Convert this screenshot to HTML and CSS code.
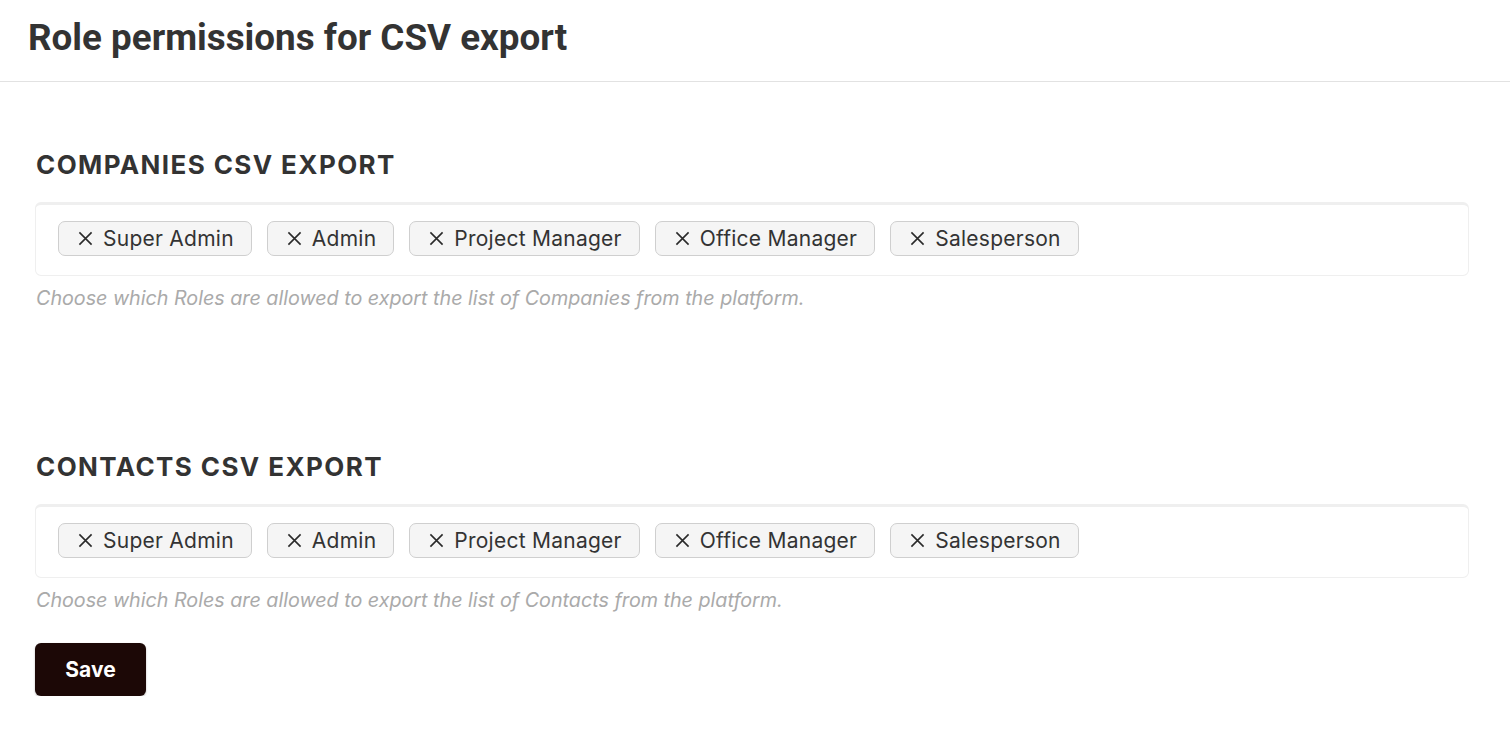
FILE: index.html
```html
<!DOCTYPE html>
<html>
<head>
<meta charset="utf-8">
<link rel="stylesheet" href="styles.css">
</head>
<body>
<header class="page-header">
  <h1 class="page-title">Role permissions for CSV export</h1>
</header>
<main class="content">
  <section class="perm-section">
    <h2 class="section-title">COMPANIES CSV EXPORT</h2>
    <div class="tag-box">
      <span class="tag"><svg class="tag-x" viewBox="0 0 16 16"><path d="M1.5 1.5L14.5 14.5M14.5 1.5L1.5 14.5"/></svg>Super Admin</span>
      <span class="tag"><svg class="tag-x" viewBox="0 0 16 16"><path d="M1.5 1.5L14.5 14.5M14.5 1.5L1.5 14.5"/></svg>Admin</span>
      <span class="tag"><svg class="tag-x" viewBox="0 0 16 16"><path d="M1.5 1.5L14.5 14.5M14.5 1.5L1.5 14.5"/></svg>Project Manager</span>
      <span class="tag"><svg class="tag-x" viewBox="0 0 16 16"><path d="M1.5 1.5L14.5 14.5M14.5 1.5L1.5 14.5"/></svg>Office Manager</span>
      <span class="tag"><svg class="tag-x" viewBox="0 0 16 16"><path d="M1.5 1.5L14.5 14.5M14.5 1.5L1.5 14.5"/></svg>Salesperson</span>
    </div>
    <p class="help">Choose which Roles are allowed to export the list of Companies from the platform.</p>
  </section>
  <section class="perm-section second">
    <h2 class="section-title">CONTACTS CSV EXPORT</h2>
    <div class="tag-box">
      <span class="tag"><svg class="tag-x" viewBox="0 0 16 16"><path d="M1.5 1.5L14.5 14.5M14.5 1.5L1.5 14.5"/></svg>Super Admin</span>
      <span class="tag"><svg class="tag-x" viewBox="0 0 16 16"><path d="M1.5 1.5L14.5 14.5M14.5 1.5L1.5 14.5"/></svg>Admin</span>
      <span class="tag"><svg class="tag-x" viewBox="0 0 16 16"><path d="M1.5 1.5L14.5 14.5M14.5 1.5L1.5 14.5"/></svg>Project Manager</span>
      <span class="tag"><svg class="tag-x" viewBox="0 0 16 16"><path d="M1.5 1.5L14.5 14.5M14.5 1.5L1.5 14.5"/></svg>Office Manager</span>
      <span class="tag"><svg class="tag-x" viewBox="0 0 16 16"><path d="M1.5 1.5L14.5 14.5M14.5 1.5L1.5 14.5"/></svg>Salesperson</span>
    </div>
    <p class="help">Choose which Roles are allowed to export the list of Contacts from the platform.</p>
  </section>
  <button class="save-btn">Save</button>
</main>
</body>
</html>
```
FILE: styles.css
```css
* { box-sizing: border-box; }
html, body { margin: 0; padding: 0; background: #fff; }
body { font-family: Inter, "Noto Sans", sans-serif; color: #333; }

.page-header {
  height: 82px;
  border-bottom: 1px solid #e2e2e2;
  padding: 16px 28px 0;
}
.page-title {
  margin: 0;
  font-family: Roboto, "Liberation Sans", sans-serif;
  font-weight: 700;
  font-size: 36.8px;
  line-height: 44px;
  color: #333;
}

.content {
  padding: 0 41px 0 35px;
}
.perm-section { padding-top: 66px; }
.perm-section.second { padding-top: 140px; }

.section-title {
  margin: 0 0 20px 1px;
  font-size: 26px;
  font-weight: 700;
  line-height: 34px;
  letter-spacing: 1.4px;
  color: #333;
}

.tag-box {
  display: flex;
  flex-wrap: wrap;
  gap: 15px;
  padding: 16px 22px 19px;
  border: 1px solid #efefef;
  border-top: 3px solid #efefef;
  border-radius: 6px;
}
.tag {
  display: inline-flex;
  align-items: center;
  height: 35px;
  padding: 0 17px 0 19px;
  background: #f5f5f5;
  border: 1px solid #cfcfcf;
  border-radius: 7px;
  font-size: 21px;
  letter-spacing: 0.25px;
  color: #333;
  gap: 10px;
}
.tag-x {
  width: 15px;
  height: 15px;
  stroke: #2a2a2a;
  stroke-width: 1.7;
  fill: none;
}

.help {
  margin: 10px 0 0 1px;
  font-size: 19.72px;
  font-style: italic;
  color: #aaa;
  line-height: 24px;
}

.save-btn {
  margin-top: 31px;
  width: 111px;
  height: 53px;
  border: none;
  border-radius: 6px;
  background: #1c0806;
  color: #fff;
  font-family: Inter, sans-serif;
  font-weight: 700;
  font-size: 21px;
  box-shadow: 0 1px 2px rgba(0,0,0,0.3);
  cursor: pointer;
}
```
